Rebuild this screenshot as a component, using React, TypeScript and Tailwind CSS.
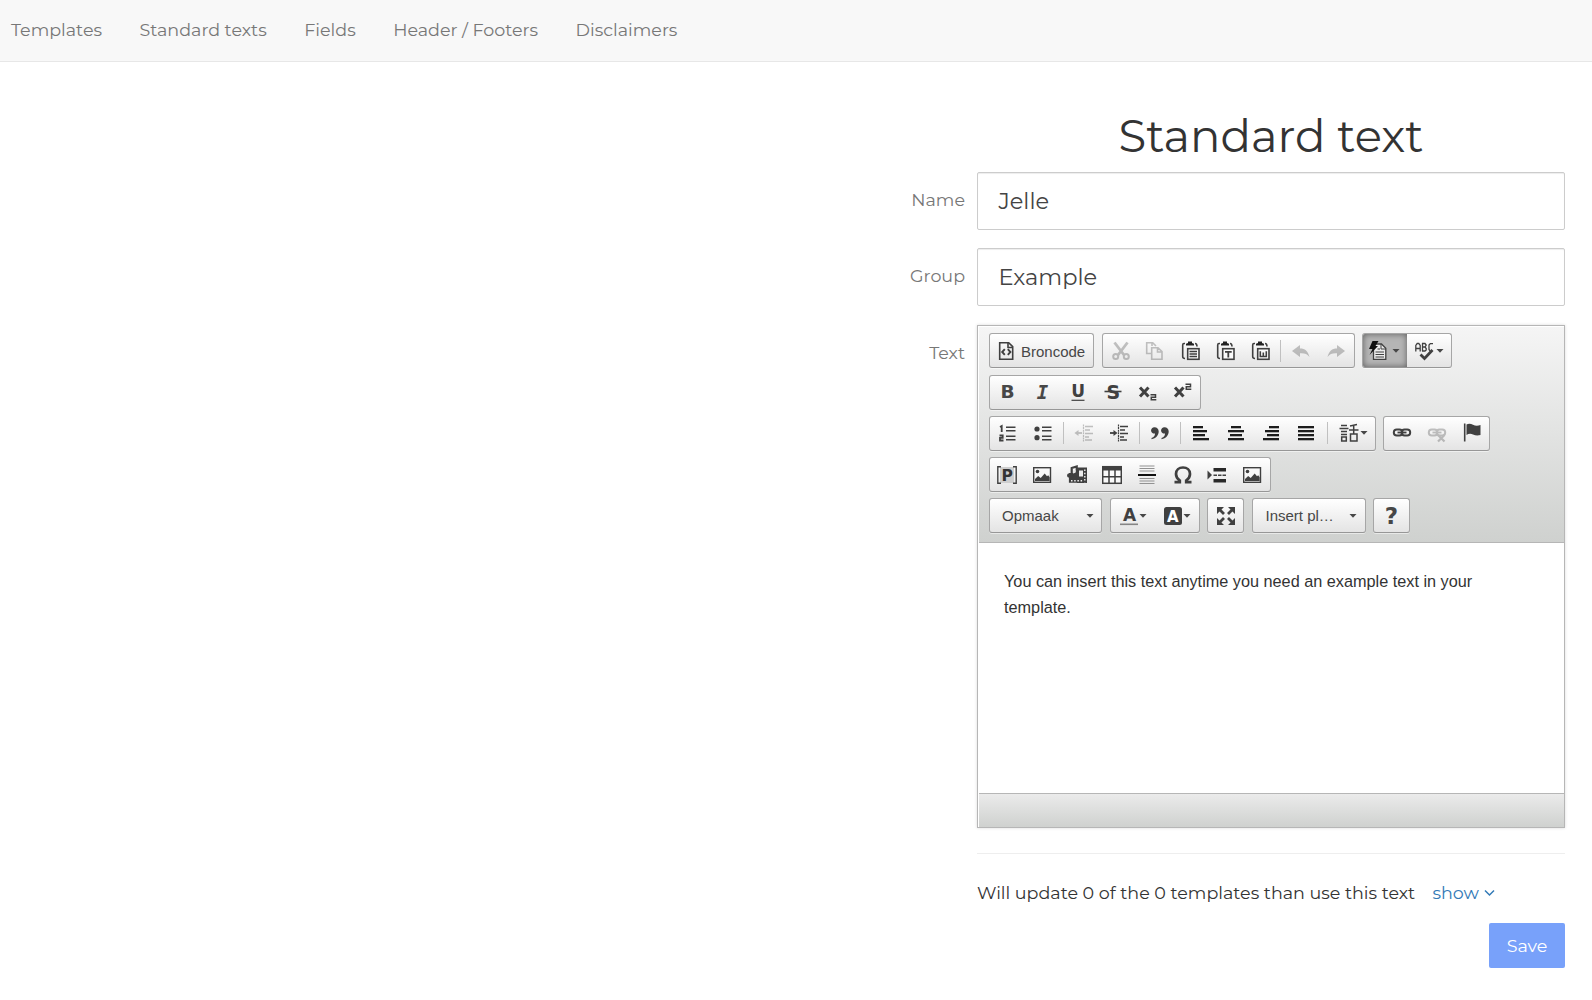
import React from 'react';

const INK = '#404040';

type IconProps = { children: React.ReactNode; dim?: boolean };

function Icon({ children, dim }: IconProps) {
  return (
    <svg width="20" height="20" viewBox="0 0 20 20" fill="none" stroke={INK} strokeWidth="1.6" className={dim ? 'shrink-0 opacity-30' : 'shrink-0'}>
      {children}
    </svg>
  );
}

function Caret() {
  return (
    <svg width="8" height="4" viewBox="0 0 8 4" className="shrink-0">
      <path d="M.5 0h7L4 3.8z" fill="#474747" />
    </svg>
  );
}

function Btn({ children, nudge = 'px-0' }: { children: React.ReactNode; nudge?: string }) {
  return <button className={'flex h-[33px] w-[35px] shrink-0 items-center justify-center ' + nudge}>{children}</button>;
}

function DropBtn({ children, active, tight }: { children: React.ReactNode; active?: boolean; tight?: boolean }) {
  return (
    <button
      className={
        active
          ? 'flex h-[33px] w-11 shrink-0 items-center gap-[3px] rounded-l-[2px] bg-[#b5b5b5] pl-[6px] shadow-[inset_0_0_6px_rgba(0,0,0,0.5)]'
          : tight
            ? 'flex h-[33px] w-11 shrink-0 items-center pl-[8px]'
            : 'flex h-[33px] w-11 shrink-0 items-center gap-px pl-[8px]'
      }
    >
      {children}
      <Caret />
    </button>
  );
}

function Group({ children }: { children: React.ReactNode }) {
  return (
    <div className="mr-[7.5px] flex h-[35px] items-center rounded-[3px] border border-[#a6a6a6] border-b-[#979797] bg-linear-to-b from-white to-[#e4e4e4] shadow-[0_1px_0_rgba(255,255,255,0.5)]">
      {children}
    </div>
  );
}

function Sep() {
  return <span className="mx-[2.7px] h-[22px] w-px shrink-0 bg-[#c0c0c0]" />;
}

function Lines({ rows }: { rows: number[][] }) {
  return (
    <>
      {rows.map(([x, y, w], i) => (
        <rect key={i} x={x} y={y} width={w} height="2.3" fill="#1c1c1c" stroke="none" />
      ))}
    </>
  );
}

function Clipboard({ children }: { children?: React.ReactNode }) {
  return (
    <Icon>
      <path d="M4 2.5H3Q1.7 2.5 1.7 4v11.500Q1.7 17.500 4 17.500M14 2.500q2 0 2 3" />
      <path d="M5 4.500V2.800L7 2V.500h4V2l2 .8v1.700z" fill="#222" stroke="none" />
      <rect x="6.700" y="7.700" width="11.300" height="10.600" fill="#fafafa" />
      {children}
    </Icon>
  );
}

function Picture() {
  return (
    <Icon>
      <rect x="1.700" y="2.700" width="16.800" height="14.600" fill="#f8f8f8" strokeWidth="1.400" />
      <circle cx="5.500" cy="6.500" r="1.800" fill={INK} stroke="none" />
      <path d="M3 16v-2l3.200-3 2.500 2 4-4.500 2.300 2.800 1.200-1 1.500 2V16z" fill={INK} stroke="none" />
    </Icon>
  );
}

function Script({ y }: { y: number }) {
  return (
    <Icon>
      <path d="M2 5.500l8.500 9M10.500 5.500L2 14.500" strokeWidth="3" />
      <path d={y > 5 ? 'M12.500 12.700h5v2.600h-4.200v2.500h5' : 'M12.500 2.200h5v2.600h-4.200v2.500h5'} strokeWidth="1.500" />
    </Icon>
  );
}

function Chain() {
  return (
    <>
      <rect x="1.800" y="6.400" width="8.600" height="6.200" rx="3" strokeWidth="2" />
      <rect x="9.600" y="6.400" width="8.600" height="6.200" rx="3" strokeWidth="2" />
      <path d="M5.500 9.500h9" strokeWidth="1.800" />
    </>
  );
}

function Indent({ out }: { out?: boolean }) {
  return (
    <Icon dim={out}>
      <path d="M9.500 1.500v17" strokeWidth="1.200" strokeDasharray="2 .6" />
      <path d="M11 3.500h8M11 7h5M11 10.500h8M11 14h4M11 17h7" strokeWidth="1.500" />
      <path d={out ? 'M3 10h5' : 'M1 10h5'} strokeWidth="1.800" />
      <path d={out ? 'M4.500 7v6L.5 10z' : 'M4.500 7v6l4-3z'} fill={INK} stroke="none" />
    </Icon>
  );
}

function Toolbar() {
  return (
    <div className="flex h-[216px] flex-col gap-[6.25px] border-b border-[#b6b6b6] bg-linear-to-b from-[#f5f5f5] to-[#cfd1cf] pt-[6.4px] pl-[10px] font-['Liberation_Sans'] text-[15px] text-[#474747]">
      <div className="flex">
        <Group>
          <button className="flex h-[33px] w-[103px] items-center pl-[7px]">
            <Icon>
              <path d="M2.700 1.700h9l4 4v12.600h-13z" />
              <path d="M11 2v4.500h4.500" />
              <path d="M7.800 8.200 5.200 11l2.600 2.800M10.800 8.200l2.600 2.800-2.600 2.800" strokeWidth="1.900" />
            </Icon>
            <span className="ml-1 pt-[3px]">Broncode</span>
          </button>
        </Group>
        <Group>
          <Btn nudge="pl-[2px]">
            <Icon dim>
              <path d="M3.500 1.500l9.500 12.500M16.500 1.500 7 14" strokeWidth="2.800" />
              <circle cx="4.700" cy="15.500" r="2.500" strokeWidth="2" />
              <circle cx="15.300" cy="15.500" r="2.500" strokeWidth="2" />
            </Icon>
          </Btn>
          <Btn>
            <Icon dim>
              <path d="M6 12.500H1.700V1.700h6L11 5M7 1.700V5" />
              <path d="M6.700 6.700h6.300l4 4v7.600H6.700zM12.500 7v4H17" />
            </Icon>
          </Btn>
          <Btn nudge="pl-[2px]">
            <Clipboard><path d="M8.500 10.500h7.500M8.500 13h7.500M8.500 15.500h7.500" /></Clipboard>
          </Btn>
          <Btn nudge="pl-[2px]">
            <Clipboard><path d="M9 10.800h6.700M12.300 11v5.500" strokeWidth="1.800" /></Clipboard>
          </Btn>
          <Btn nudge="pl-[2px]">
            <Clipboard><path d="M9.300 10.200v5.300h6v-5.300M12.300 11.500v4" /></Clipboard>
          </Btn>
          <Sep />
          <Btn>
            <Icon dim><path d="M1 10l8-6v3.500c5 0 8 2.500 9.500 8.500-2.500-3.500-5-4-9.500-3.800V16z" fill={INK} stroke="none" /></Icon>
          </Btn>
          <Btn>
            <Icon dim><path d="M19 10l-8-6v3.500c-5 0-8 2.500-9.500 8.500 2.500-3.500 5-4 9.500-3.800V16z" fill={INK} stroke="none" /></Icon>
          </Btn>
        </Group>
        <Group>
          <DropBtn active>
            <Icon>
              <path d="M4.500 3h8l4.300 4.300V18.300H4.500z" fill="#ececec" strokeWidth="1.300" />
              <path d="M12 3v5h5M8.500 8H11M6.500 11h8.500M6.500 13.500h8.500M6.500 16h8.500" strokeWidth="1" />
              <path d="M3.500 0h6L6.500 5H9L.5 14 3.500 8H0z" fill="#111" stroke="none" />
            </Icon>
          </DropBtn>
          <DropBtn>
            <Icon>
              <path d="M.800 10.500V4.500L2.200 2.500h1.600L5.200 4.500v6M1 7.500h4M7.500 2.200v8M7 2.500h3l1.200 1.500L10 6H7.500M10 6l1.200 1.500v1.500L10 10H7M18 2.600h-2.700L14 4v4.500L15.200 10" strokeWidth="1.300" />
              <path d="M5.500 13.500l4 4 8-8.500" strokeWidth="2.800" />
            </Icon>
          </DropBtn>
        </Group>
      </div>
      <div className="flex">
        <Group>
          <Btn><span className="font-['DejaVu_Sans'] text-[18.500px] font-bold">B</span></Btn>
          <Btn><span className="font-['DejaVu_Sans_Mono'] text-[19px] font-bold italic">I</span></Btn>
          <Btn>
            <Icon>
              <text x="3.200" y="15" fontFamily="DejaVu Sans" fontWeight="bold" fontSize="17" fill={INK} stroke="none">U</text>
              <path d="M3.500 18.300h13" strokeWidth="1.200" />
            </Icon>
          </Btn>
          <Btn>
            <Icon>
              <text x="3.500" y="16.500" fontFamily="DejaVu Sans" fontWeight="bold" fontSize="19" fill={INK} stroke="none">S</text>
              <path d="M1.500 9.500h17" />
            </Icon>
          </Btn>
          <Btn><Script y={12} /></Btn>
          <Btn><Script y={2} /></Btn>
        </Group>
      </div>
      <div className="flex">
        <Group>
          <Btn>
            <Icon>
              <path d="M2 4l1.700-1v6M1.500 12.500h3.200v2.300H2v2.700h3.500" strokeWidth="1.800" />
              <path d="M8 4.200h9.500M8 7.700h9.500M8 13.200h9.500M8 16.700h9.500" />
            </Icon>
          </Btn>
          <Btn>
            <Icon>
              <circle cx="4" cy="6" r="2.600" fill={INK} stroke="none" />
              <circle cx="4" cy="14.700" r="2.600" fill={INK} stroke="none" />
              <path d="M9 4.200h9.500M9 7.700h9.500M9 13.200h9.500M9 16.700h9.500" />
            </Icon>
          </Btn>
          <Sep />
          <Btn><Indent out /></Btn>
          <Btn><Indent /></Btn>
          <Sep />
          <Btn>
            <Icon>
              <path d="M4.500 4.200a3.200 3.200 0 1 0 .5 6.300c0 2-1 3.500-3.500 4.500v1.200C6 15.500 8.700 12 8.700 8.500c0-2.500-1.700-4.300-4.200-4.300zM14.500 4.200a3.200 3.200 0 1 0 .5 6.300c0 2-1 3.500-3.500 4.500v1.200c4.500-.7 7.200-4.200 7.200-7.700 0-2.500-1.700-4.300-4.200-4.300z" fill={INK} stroke="none" />
            </Icon>
          </Btn>
          <Sep />
          <Btn nudge="pr-px"><Icon><Lines rows={[[2, 3, 10], [2, 7, 14], [2, 11, 12], [2, 15, 16]]} /></Icon></Btn>
          <Btn nudge="pr-px"><Icon><Lines rows={[[5, 3, 10], [2, 7, 16], [4, 11, 12], [2, 15, 16]]} /></Icon></Btn>
          <Btn nudge="pr-px"><Icon><Lines rows={[[8, 3, 10], [4, 7, 14], [6, 11, 12], [2, 15, 16]]} /></Icon></Btn>
          <Btn nudge="pr-px"><Icon><Lines rows={[[2, 3, 16], [2, 7, 16], [2, 11, 16], [2, 15, 16]]} /></Icon></Btn>
          <Sep />
          <DropBtn>
            <Icon>
              <path d="M2 2.500h6M.500 5.500h9M2 8.500h6M2 11.500h6M2.700 18v-4h4.600v4zM18 1.500l-7 1.500M10 7h9.500M14.700 3v8M11.500 18v-7h6.500v7z" strokeWidth="1.500" />
            </Icon>
          </DropBtn>
        </Group>
        <Group>
          <Btn nudge="pl-px"><Icon><Chain /></Icon></Btn>
          <Btn nudge="pl-px"><Icon dim><Chain /><path d="M11 12l6.500 6.500M17.500 12l-6.500 6.500" strokeWidth="2.200" /></Icon></Btn>
          <Btn nudge="pl-px">
            <Icon>
              <path d="M2.700 .5v18" />
              <path d="M4.500 1.500q3-1.500 6.500.3t7.500.2v10q-4 1.200-7.500-.6T4.500 12z" fill={INK} stroke="none" />
            </Icon>
          </Btn>
        </Group>
      </div>
      <div className="flex">
        <Group>
          <Btn nudge="pr-px">
            <Icon>
              <path d="M3 2h14v16H3z" fill="#cecece" stroke="none" />
              <path d="M4 1.700H.8v16.600H4M16 1.700h3.200v16.600H16" strokeWidth="1.400" />
              <text x="4.500" y="15.500" fontFamily="DejaVu Sans" fontWeight="bold" fontSize="15.500" fill="#333" stroke="none">P</text>
            </Icon>
          </Btn>
          <Btn nudge="pr-px"><Picture /></Btn>
          <Btn nudge="pr-px">
            <Icon>
              <path d="M2.700 8v9h16V8" fill={INK} />
              <path d="M10.700 3.200h8.600v14h-8.600z" fill={INK} />
              <path d="M12 5.500h4v6h-4z" fill="#ececec" stroke="none" />
              <path d="M17.800 4.500v13M4 15.700h12" stroke="#eee" strokeDasharray="1.500 1.700" strokeWidth="1.400" />
              <path d="M4.700 10V3L9.700 1.500v7" strokeWidth="2.200" />
              <ellipse cx="2.900" cy="10.500" rx="2.800" ry="2.200" fill={INK} stroke="none" />
              <ellipse cx="8.200" cy="9.300" rx="2.600" ry="2.200" fill={INK} stroke="none" />
              <path d="M6 5.500l2.500-.8v3L6 8.500z" fill="#e8e8e8" stroke="none" />
            </Icon>
          </Btn>
          <Btn nudge="pr-px">
            <Icon>
              <rect x=".700" y="1.700" width="18.600" height="16.600" fill="#fafafa" strokeWidth="1.500" />
              <path d="M0 1h20v4.500H0z" fill={INK} stroke="none" />
              <path d="M7 5v13M13 5v13M1 11.700h18" strokeWidth="1.500" />
            </Icon>
          </Btn>
          <Btn nudge="pr-px">
            <Icon>
              <path d="M2.500 1h15M2.500 3.500h15M2.500 6h15M2.500 13.500h15M2.500 16h15M2.500 18.500h15" strokeWidth="1.100" stroke="#929292" />
              <path d="M1 10h18" strokeWidth="2" stroke="#111" />
            </Icon>
          </Btn>
          <Btn>
            <Icon><path d="M1.500 17.200h5.300v-1.700C4 13.500 3 11.500 3 9c0-4 3-6.500 7-6.500S17 5 17 9c0 2.500-1 4.500-3.800 6.500v1.700h5.300" strokeWidth="2.700" /></Icon>
          </Btn>
          <Btn nudge="pr-px">
            <Icon>
              <path d="M.500 5.500v9L5 10z" fill={INK} stroke="none" />
              <path d="M6.500 4.700H19M6.500 15.700H19" strokeWidth="3.400" stroke="#2a2a2a" />
              <path d="M6.500 10.200H19" strokeDasharray="3.500 1" strokeWidth="1.500" />
            </Icon>
          </Btn>
          <Btn nudge="pr-px"><Picture /></Btn>
        </Group>
      </div>
      <div className="flex">
        <Group>
          <button className="flex h-[33px] w-[111px] items-center justify-between pr-[7px] pl-3"><span className="pt-px">Opmaak</span><Caret /></button>
        </Group>
        <Group>
          <DropBtn tight>
            <Icon>
              <text x="4" y="14.500" fontFamily="DejaVu Sans" fontWeight="bold" fontSize="17" fill={INK} stroke="none">A</text>
              <path d="M1 18.300h18" stroke="#858585" />
            </Icon>
          </DropBtn>
          <DropBtn tight>
            <Icon>
              <rect x="1" y="1" width="18" height="18" rx="2.500" fill={INK} stroke="none" />
              <text x="4" y="15.500" fontFamily="DejaVu Sans" fontWeight="bold" fontSize="15" fill="#fff" stroke="none">A</text>
            </Icon>
          </DropBtn>
        </Group>
        <Group>
          <Btn>
            <Icon>
              <path d="M3 3l5 5M17 3l-5 5M3 17l5-5M17 17l-5-5" strokeWidth="2.800" />
              <path d="M1 1h7L1 8zM19 1h-7l7 7zM1 19h7l-7-7zM19 19h-7l7-7z" fill={INK} stroke="none" />
            </Icon>
          </Btn>
        </Group>
        <Group>
          <button className="flex h-[33px] w-[112px] items-center justify-between pr-[8px] pl-[13px]"><span className="pt-px">Insert pl…</span><Caret /></button>
        </Group>
        <Group>
          <Btn><span className="font-['DejaVu_Sans'] text-[23px] leading-6 font-bold">?</span></Btn>
        </Group>
      </div>
    </div>
  );
}

const navItems = ['Templates', 'Standard texts', 'Fields', 'Header / Footers', 'Disclaimers'];

function Field({ label, value }: { label: string; value: string }) {
  return (
    <div className="mb-[18px] flex">
      <label className="w-[77px] pt-4 pr-3 text-right leading-6 text-[#777]">{label}</label>
      <div className="h-[58px] w-[588px] rounded-[2px] border border-[#ccc] pt-[13px] pl-[20.500px] text-[22.5px] leading-[30px] text-[#444] shadow-[inset_0_1px_1px_rgba(0,0,0,0.075)]">{value}</div>
    </div>
  );
}

export default function App() {
  return (
    <div className="h-[1000px] w-full overflow-hidden bg-white font-['Montserrat','Inter',sans-serif] text-[17.500px] font-normal">
      <nav className="flex h-[62px] gap-[37.500px] border-b border-[#e7e7e7] bg-[#f8f8f8] pt-[18px] pl-[11px] leading-6 text-[#777]">
        {navItems.map((label) => (
          <a key={label} className="shrink-0 whitespace-nowrap">{label}</a>
        ))}
      </nav>
      <main className="ml-[900px] w-[665px]">
        <h1 className="ml-[77px] h-[110px] pt-[49px] text-center text-[45px] leading-[50px] text-[#333]">Standard text</h1>
        <Field label="Name" value="Jelle" />
        <Field label="Group" value="Example" />
        <div className="flex">
          <label className="mt-px w-[77px] pt-4 pr-3 text-right leading-6 text-[#777]">Text</label>
          <div className="mt-px h-[503px] w-[588px] border border-[#b6b6b6] bg-white p-px pr-0 font-normal shadow-[0_0_3px_rgba(0,0,0,0.15)]">
            <Toolbar />
            <div className="h-[250px] pt-[25px] pl-[25px] font-['Liberation_Sans'] text-[16.25px] leading-[26px] text-[#333]">
              <p className="w-[500px]">You can insert this text anytime you need an example text in your template.</p>
            </div>
            <div className="h-[34px] border-t border-[#b6b6b6] bg-linear-to-b from-[#ebebeb] to-[#cfd1cf]" />
          </div>
        </div>
        <div className="ml-[77px]">
          <hr className="mt-[25px] border-[#eee]" />
          <p className="mt-[27px] flex items-center leading-6 text-[#333]">
            <span className="w-[455.500px] whitespace-nowrap">Will update 0 of the 0 templates than use this text</span>
            <a className="text-[#337ab7]">show</a>
            <svg width="11" height="8" viewBox="0 0 11 8" className="ml-[5px]"><path d="M1 1.500l4.500 4.500L10 1.500" fill="none" stroke="#337ab7" strokeWidth="1.500" /></svg>
          </p>
          <div className="mt-[18px] flex justify-end">
            <button className="h-[45px] w-[76px] rounded-[2px] bg-[#78a1fa] pt-px text-white">Save</button>
          </div>
        </div>
      </main>
    </div>
  );
}
